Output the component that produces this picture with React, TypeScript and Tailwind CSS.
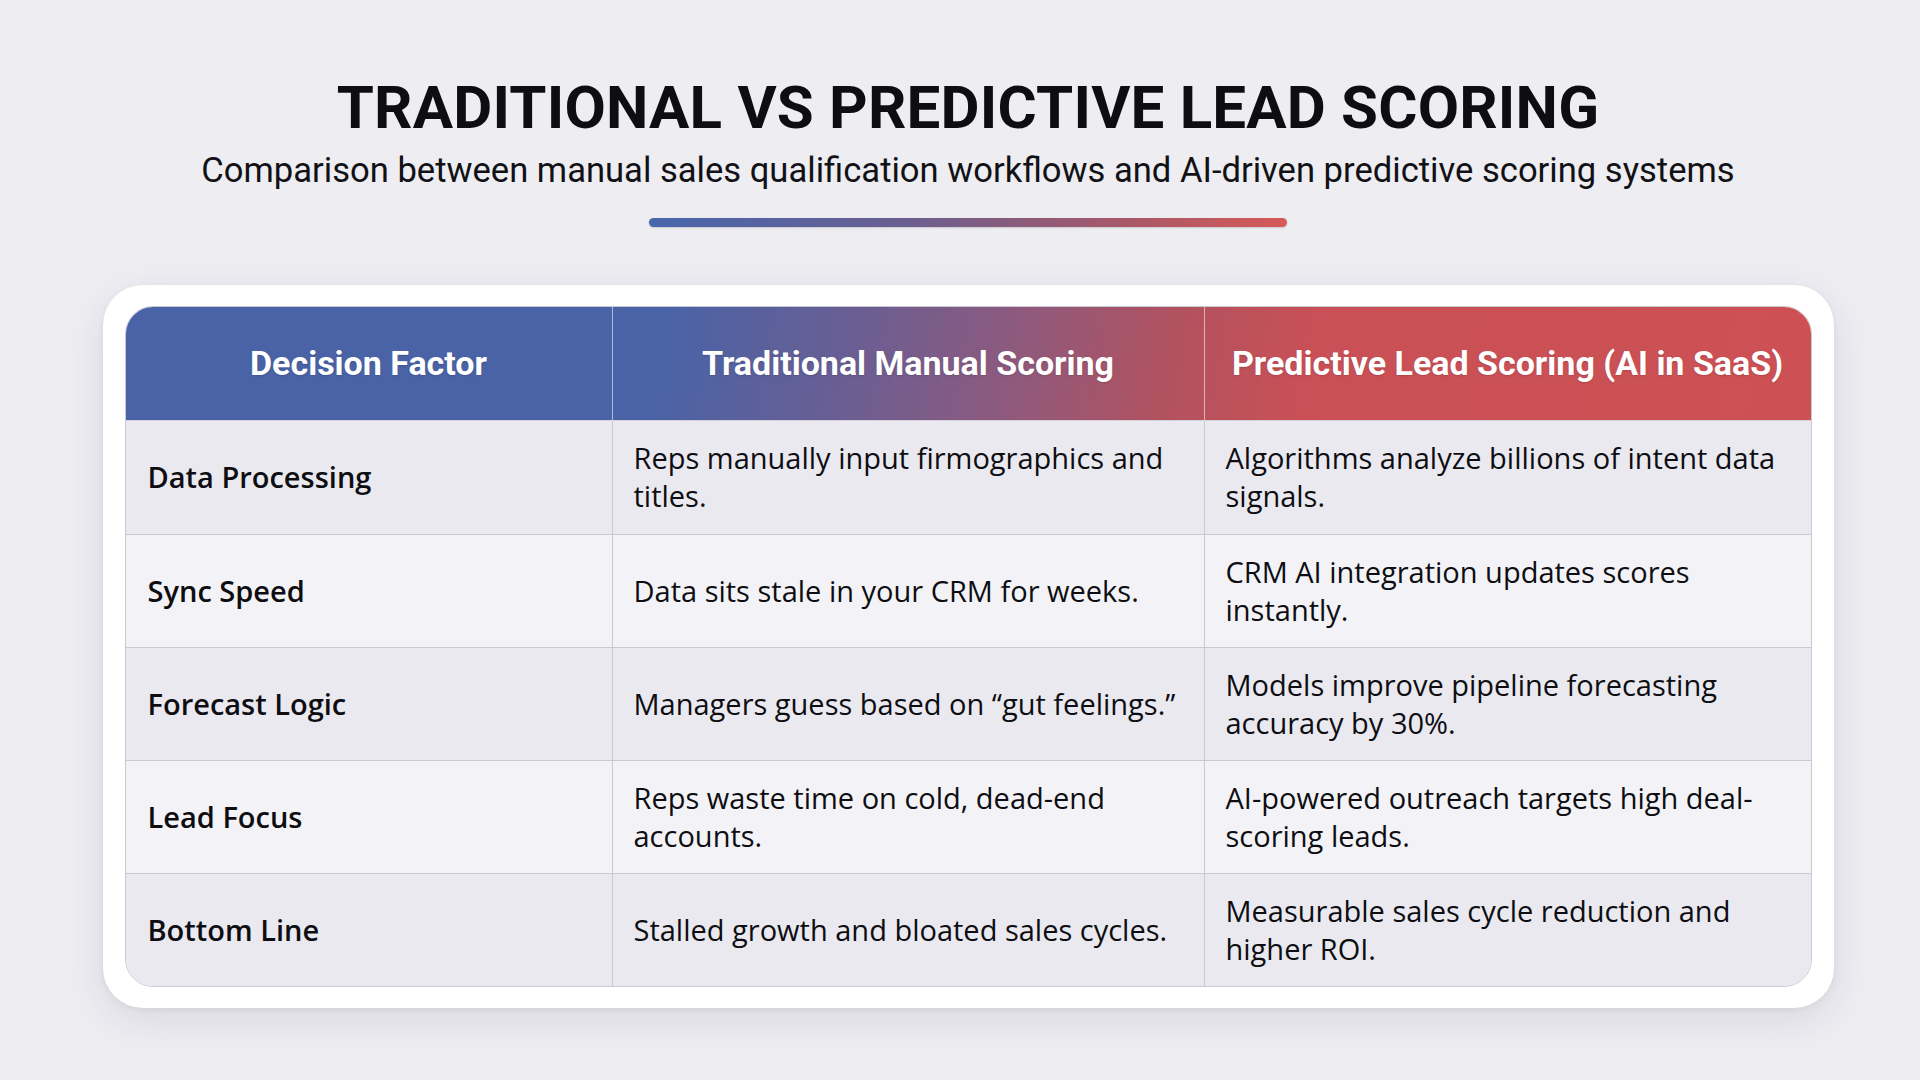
import React from "react";

const rows: { factor: string; trad: string; pred: string }[] = [
  {
    factor: "Data Processing",
    trad: "Reps manually input firmographics and titles.",
    pred: "Algorithms analyze billions of intent data signals.",
  },
  {
    factor: "Sync Speed",
    trad: "Data sits stale in your CRM for weeks.",
    pred: "CRM AI integration updates scores instantly.",
  },
  {
    factor: "Forecast Logic",
    trad: "Managers guess based on \u201cgut feelings.\u201d",
    pred: "Models improve pipeline forecasting accuracy by 30%.",
  },
  {
    factor: "Lead Focus",
    trad: "Reps waste time on cold, dead-end accounts.",
    pred: "AI-powered outreach targets high deal-scoring leads.",
  },
  {
    factor: "Bottom Line",
    trad: "Stalled growth and bloated sales cycles.",
    pred: "Measurable sales cycle reduction and higher ROI.",
  },
];

export default function App() {
  return (
    <div className="min-h-screen w-full bg-[#ededf2] flex flex-col items-center pt-[78px] pl-[16px] font-['Roboto',sans-serif]">
      <h1 className="text-[60px] leading-none font-bold text-[#0d0d12] tracking-[0.2px]">
        TRADITIONAL VS PREDICTIVE LEAD SCORING
      </h1>
      <p className="mt-[15px] text-[34.6px] leading-none text-[#111116]">
        Comparison between manual sales qualification workflows and AI-driven predictive scoring systems
      </p>
      <div className="mt-[30px] h-[9px] w-[638px] rounded-full bg-[linear-gradient(90deg,#4867ad_0%,#6a5f91_40%,#a95868_75%,#d65a58_100%)] shadow-[0_1px_2px_rgba(0,0,0,0.15)]" />

      <div className="mt-[58px] w-[1731px] rounded-[40px] bg-white p-[21px_22px] shadow-[0_12px_40px_rgba(40,40,70,0.10),0_2px_6px_rgba(40,40,70,0.06)]">
        <div className="rounded-[28px] overflow-hidden border border-[#c9c9d2] font-['Open_Sans',sans-serif]">
          <div className="grid grid-cols-[487px_592px_606px] h-[114px] bg-[linear-gradient(100deg,#4a63a6_0%,#4a63a6_32%,#6a5e93_43%,#8c5a7f_52%,#b2525f_62%,#c95056_70%,#cd5154_100%)] font-['Roboto',sans-serif] text-white text-[34px] font-bold border-b border-[#d9d3e0]">
            <div className="flex items-center justify-center border-r border-[rgba(255,255,255,0.55)] [text-shadow:0_1px_2px_rgba(0,0,0,0.15)]">
              Decision Factor
            </div>
            <div className="flex items-center justify-center border-r border-[rgba(255,255,255,0.55)] [text-shadow:0_1px_2px_rgba(0,0,0,0.15)]">
              Traditional Manual Scoring
            </div>
            <div className="flex items-center justify-center [text-shadow:0_1px_2px_rgba(0,0,0,0.15)]">
              Predictive Lead Scoring (AI in SaaS)
            </div>
          </div>
          {rows.map((r, i) => (
            <div
              key={r.factor}
              className={
                "grid grid-cols-[487px_592px_606px] h-[113px] text-[#0e0e12] " +
                (i > 0 ? "border-t border-[#c9c9d1] " : "") +
                (i % 2 === 0 ? "bg-[#e9e9ef]" : "bg-[#f3f3f7]")
              }
            >
              <div className="flex items-center px-[22px] border-r border-[#c9c9d1] text-[29px] font-semibold leading-[38px]">
                {r.factor}
              </div>
              <div className="flex items-center pl-[21px] pr-[14px] border-r border-[#c9c9d1] text-[29px] leading-[38px]">
                {r.trad}
              </div>
              <div className="flex items-center pl-[21px] pr-[14px] text-[29px] leading-[38px]">
                {r.pred}
              </div>
            </div>
          ))}
        </div>
      </div>
    </div>
  );
}
